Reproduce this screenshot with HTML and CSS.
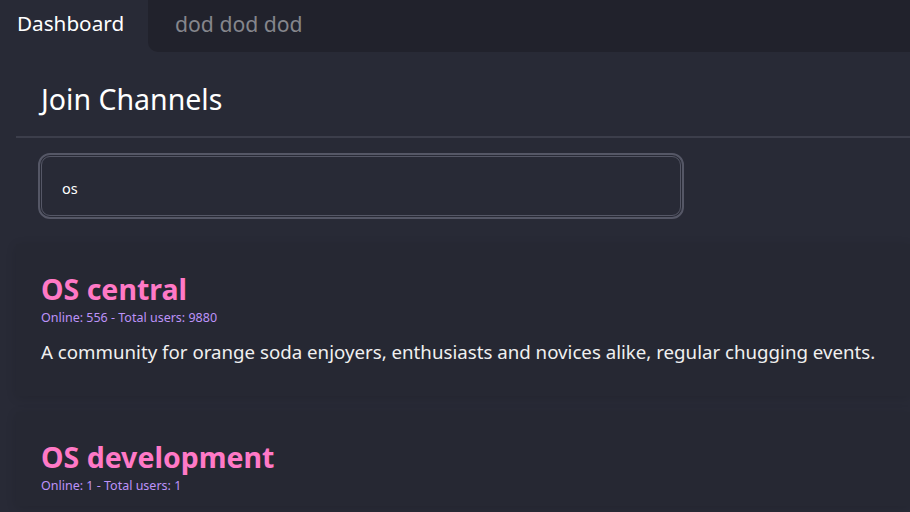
FILE: index.html
```html
<!DOCTYPE html>
<html>
<head>
<meta charset="utf-8">
<link rel="stylesheet" href="styles.css">
</head>
<body>
<nav class="tabs">
  <div class="tab tab-active">Dashboard</div>
  <div class="tab tab-inactive">dod dod dod</div>
</nav>
<main class="main">
  <header class="page-header">
    <h1 class="page-title">Join Channels</h1>
  </header>
  <div class="search-wrap">
    <input class="search" type="text" value="os">
  </div>
  <section class="card">
    <h2 class="card-title">OS central</h2>
    <div class="card-meta">Online: 556 - Total users: 9880</div>
    <p class="card-desc">A community for orange soda enjoyers, enthusiasts and novices alike, regular chugging events.</p>
  </section>
  <section class="card">
    <h2 class="card-title">OS development</h2>
    <div class="card-meta">Online: 1 - Total users: 1</div>
  </section>
</main>
</body>
</html>
```
FILE: styles.css
```css
* { box-sizing: border-box; }
html, body {
  margin: 0;
  padding: 0;
  background: #282a36;
  color: #f8f8f2;
  font-family: "Noto Sans", "Open Sans", sans-serif;
  overflow: hidden;
  height: 512px;
}
.tabs {
  display: flex;
  height: 52px;
}
.tab {
  display: flex;
  align-items: center;
  font-size: 20.7px;
  padding-bottom: 6px;
}
.tab-active {
  width: 148px;
  padding-left: 17px;
  color: #ffffff;
  background: #282a36;
}
.tab-inactive {
  flex: 1;
  padding-left: 27px;
  color: #85868c;
  background: #21222c;
  border-bottom-left-radius: 10px;
  font-size: 21.2px;
}
.main {
  margin-left: 16px;
}
.page-header {
  height: 86px;
  display: flex;
  align-items: center;
  padding: 10px 0 0 25px;
  border-bottom: 2px solid #3c3e4b;
}
.page-title {
  margin: 0;
  font-size: 28.5px;
  font-weight: 400;
  color: #ffffff;
}
.search-wrap {
  padding: 18px 0 28px 25px;
}
.search {
  display: block;
  width: 640px;
  height: 60px;
  background: #282a36;
  border: 1px solid #555766;
  border-radius: 9px;
  outline: 2px solid #555766;
  outline-offset: 1px;
  color: #ffffff;
  font-family: inherit;
  font-size: 14.5px;
  padding: 4px 0 0 20px;
}
.card {
  background: #262833;
  box-shadow: 0 2px 10px rgba(0, 0, 0, 0.12);
  padding: 28px 25px 10px;
  margin-bottom: 16px;
}
.card-title {
  margin: 0;
  font-size: 28.5px;
  line-height: 34px;
  font-weight: 700;
  color: #ff79c6;
}
.card-meta {
  margin-top: 1px;
  font-size: 12.5px;
  line-height: 21px;
  color: #bd93f9;
}
.card-desc {
  margin: 11px 0 21px;
  font-size: 18.7px;
  line-height: 26px;
  color: #f0f0f0;
}
```
